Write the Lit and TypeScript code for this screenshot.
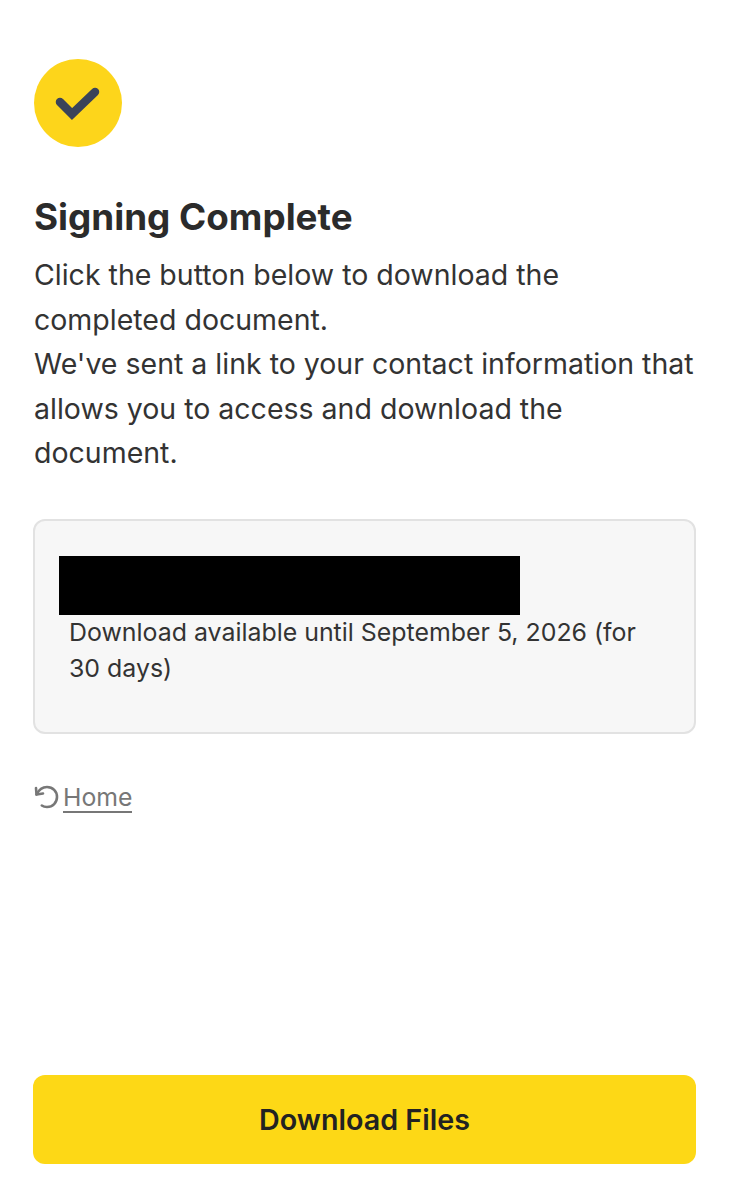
import { LitElement, html, css } from "lit";
import { customElement } from "lit/decorators.js";

@customElement("app-root")
export class AppRoot extends LitElement {
  static styles = css`
    :host { display: block; height: 1200px; background: #fff; font-family: Inter, "Liberation Sans", sans-serif; color: #2b2b2b; }
    .page { box-sizing: border-box; height: 1200px; padding: 59px 33px 36px; display: flex; flex-direction: column; }
    .badge { width: 88px; height: 88px; margin-left: 1px; border-radius: 50%; background: #fdd51b; display: flex; align-items: center; justify-content: center; flex: none; }
    h1 { margin: 48px 0 0 1px; font-size: 36.8px; line-height: 44px; font-weight: 700; color: #2b2b2b; }
    .msg { margin: 14px 0 0 1px; font-size: 28.5px; line-height: 44.6px; font-weight: 400; color: #333; }
    .card { margin-top: 43px; height: 215px; box-sizing: border-box; border: 2px solid #e2e2e2; border-radius: 12px; background: #f7f7f7; padding: 35px 24px; }
    .redact { width: 461px; height: 59px; background: #000; }
    .until { margin: -1px 0 0 10px; font-size: 24.9px; line-height: 36px; color: #333; }
    .home { margin: 49px 0 0 0; display: flex; align-items: center; gap: 2px; color: #777; font-size: 24.8px; line-height: 28px; }
    .home svg { flex: none; }
    .home a { color: #777; text-decoration: none; border-bottom: 2px solid #777; }
    .spacer { flex: 1; }
    button { height: 89px; border: none; border-radius: 12px; background: #fdd816; color: #222; font: 600 28.7px Inter, "Liberation Sans", sans-serif; width: 100%; }
  `;

  render() {
    return html`<div class="page">
      <div class="badge">
        <svg width="46" height="38" viewBox="0 0 46 38"><path d="M5 18 L17 30 L40 8" fill="none" stroke="#3a4359" stroke-width="8.5" stroke-linecap="round" stroke-linejoin="miter"/></svg>
      </div>
      <h1>Signing Complete</h1>
      <p class="msg">Click the button below to download the completed document.<br />We've sent a link to your contact information that allows you to access and download the document.</p>
      <div class="card">
        <div class="redact"></div>
        <p class="until">Download available until September 5, 2026 (for 30 days)</p>
      </div>
      <div class="home">
        <svg width="28" height="28" viewBox="0 0 28 28" fill="none" stroke="#777" stroke-width="2.6" stroke-linecap="round" stroke-linejoin="round"><path d="M3 4 L3.5 10.5 L10 9.5"/><path d="M3.5 10.5 C6 5.5 10 3 14 3 C19.8 3 24 7.5 24 13 C24 18.5 19.8 23 14 23 C12 23 10.2 22.5 8.8 21.5"/></svg>
        <a>Home</a>
      </div>
      <div class="spacer"></div>
      <button>Download Files</button>
    </div>`;
  }
}
